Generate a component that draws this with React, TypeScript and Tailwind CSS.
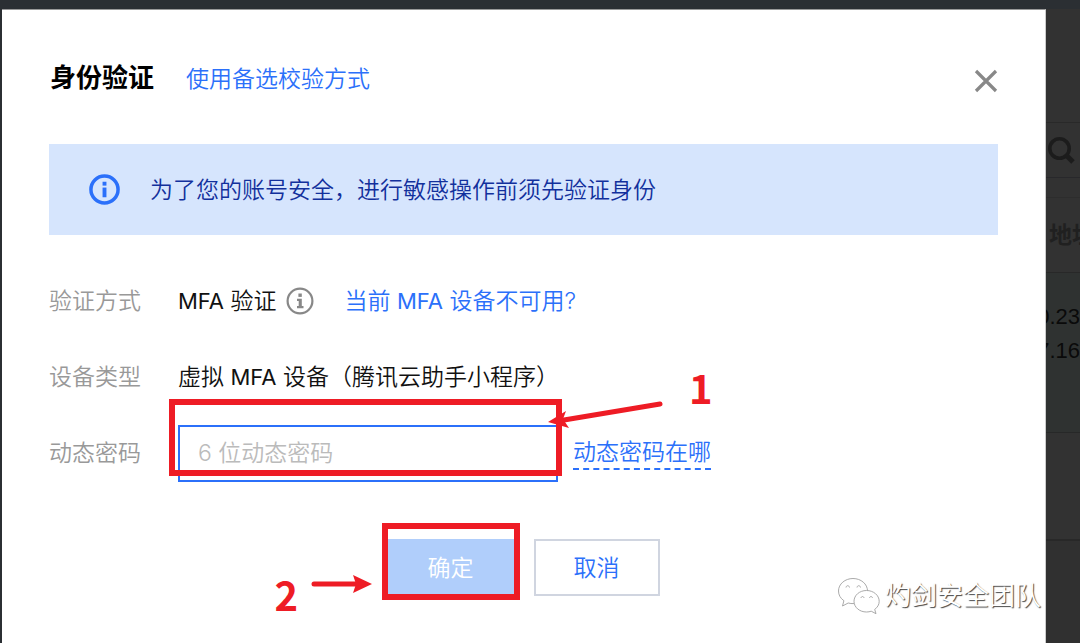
import React from "react";

type InfoIconProps = { className: string; ring: number };

function InfoIcon({ className, ring }: InfoIconProps) {
  return (
    <svg viewBox="0 0 32 32" className={className} fill="currentColor" aria-hidden="true">
      <circle cx="16" cy="16" r="14" fill="none" stroke="currentColor" strokeWidth={ring} />
      <rect x="14" y="8" width="4" height="4" />
      <rect x="14" y="14" width="4" height="10" />
    </svg>
  );
}

function SerifInfoIcon({ className }: { className: string }) {
  return (
    <svg viewBox="0 0 28 28" className={className} fill="currentColor" aria-hidden="true">
      <circle cx="14" cy="14" r="12.4" fill="none" stroke="currentColor" strokeWidth="2.2" />
      <rect x="12.4" y="6.5" width="3.4" height="3.4" />
      <path d="M11 11.8h4.8v7.2h1.7v2.2H11V19h1.7v-5H11z" />
    </svg>
  );
}

function WeChatMark() {
  return (
    <svg
      viewBox="0 0 44 38"
      className="h-[38px] w-11 shrink-0"
      fill="white"
      stroke="#a0a0a0"
      strokeWidth="0.9"
      aria-hidden="true"
    >
      <path d="M16 1.5C8 1.5 1.500 7 1.500 14c0 4 2 7.400 5.400 9.700L5.500 29l5.700-3c1.800.5 3.500.7 5.800.6C24 26 30.500 21 30.500 14S24 1.500 16 1.500z" />
      <path d="M29.500 13.500c-7 0-12.500 4.800-12.500 10.800S22.500 35 29.500 35c1.800 0 3.300-.3 4.700-.8l4.800 2.500-1.300-4.300c2.800-2 4.500-4.800 4.500-8.100 0-6-5.700-10.800-12.700-10.800z" />
      <path
        fill="none"
        d="M9 10.500c.3-2.400 3.200-2.400 3.500 0M20 10.500c.3-2.400 3.200-2.400 3.500 0M24 21c.3-2 2.700-2 3 0M32.500 21c.3-2 2.700-2 3 0"
      />
    </svg>
  );
}

function PageBehind() {
  return (
    <aside className="flex w-[34px] shrink-0 flex-col overflow-hidden bg-[#323232]">
      <div className="h-[114px] border-b border-[#292929]" />
      <div className="flex h-[55px] items-center border-b border-[#28282b]">
        <svg viewBox="0 0 28 28" className="ml-px h-7 w-7" fill="none" stroke="#1c1c1c" aria-hidden="true">
          <circle cx="12.500" cy="12.500" r="9.700" strokeWidth="3.600" />
          <path d="M19.500 19.500l6.500 6.500" strokeWidth="5" />
        </svg>
      </div>
      <div className="h-5 border-b border-[#2d2d2d]" />
      <div className="flex h-[75px] items-center border-b border-[#282828] pl-[3px] text-[23px] leading-8 font-bold whitespace-nowrap text-[#202020]">
        地址
      </div>
      <div className="flex h-40 flex-col items-end border-b border-[#272828] bg-[#2f3231] pt-[27px] font-['Liberation_Sans',sans-serif] text-[22px] leading-[34px] font-normal text-[#0a0a0a]">
        <span>0.23</span>
        <span>7.16</span>
      </div>
      <div className="h-[108px] border-b-2 border-[#282828]" />
      <div className="flex-1 bg-[#303030]" />
    </aside>
  );
}

export default function App() {
  return (
    <div className="flex min-h-screen flex-col overflow-hidden bg-[#2b2f33] pt-[9px] font-['Inter','Noto_Sans_CJK_SC',sans-serif] text-[23px] leading-8 font-[350] text-[#111]">
      <div className="flex flex-1 pl-[2px]">
        <main
          role="dialog"
          aria-labelledby="dialog-title"
          className="relative min-w-0 flex-1 border-t border-r border-t-[#999] border-r-[#ccc] bg-white pr-[47px] pl-[47px]"
        >
          <header className="flex h-[134px] items-start pt-[52px]">
            <h1 id="dialog-title" className="pl-px text-[26px] font-bold text-black">
              身份验证
            </h1>
            <a href="#alternative" className="ml-8 pt-px text-[#2b70fa]">
              使用备选校验方式
            </a>
            <button type="button" aria-label="关闭" className="mt-[7px] ml-auto h-6 w-6 text-[#888]">
              <svg viewBox="0 0 24 24" className="h-6 w-6" fill="none" stroke="currentColor" strokeWidth="3.2" aria-hidden="true">
                <path d="M2 2l20 20M22 2L2 22" />
              </svg>
            </button>
          </header>

          <div className="flex h-[91px] items-center bg-[#d6e5fd] pl-10 text-[#12309c]">
            <InfoIcon className="h-[31px] w-[31px] shrink-0 text-[#2b70fa]" ring={3.6} />
            <p className="ml-[30px]">为了您的账号安全，进行敏感操作前须先验证身份</p>
          </div>

          <form onSubmit={(e: React.FormEvent) => e.preventDefault()}>
            <div className="mt-7 grid grid-cols-[129px_1fr] auto-rows-[76px] items-center">
              <span className="text-[#999]">验证方式</span>
              <div className="flex items-center">
                <span>
                  <span className="text-[22px] font-normal">MFA</span> 验证
                </span>
                <SerifInfoIcon className="ml-[9px] h-7 w-7 shrink-0 text-[#888]" />
                <a href="#unavailable" className="ml-[31px] text-[#2b70fa]">
                  当前 <span className="text-[22px] font-normal">MFA</span> 设备不可用?
                </a>
              </div>

              <span className="text-[#999]">设备类型</span>
              <span>
                虚拟 <span className="text-[22px] font-normal">MFA</span> 设备（腾讯云助手小程序）
              </span>

              <label htmlFor="code" className="text-[#999]">
                动态密码
              </label>
              <div className="flex items-center">
                <div className="relative">
                  <input
                    id="code"
                    type="text"
                    placeholder="6 位动态密码"
                    className="block h-[57px] w-[380px] border-2 border-[#2b70fa] bg-white px-[18px] outline-none placeholder:text-[#bbb]"
                  />
                  <div className="pointer-events-none absolute -top-[26px] -left-[9px] h-[77px] w-[393px] border-[6px] border-[#ee1c25]" />
                  <svg
                    viewBox="0 0 120 30"
                    className="pointer-events-none absolute -top-[25px] left-[368px] h-[30px] w-[120px]"
                    aria-hidden="true"
                  >
                    <path d="M18 20L114 4" stroke="#ee1c25" strokeWidth="5" strokeLinecap="round" />
                    <path d="M2 22L20 11L17 19L23 28z" fill="#ee1c25" />
                  </svg>
                  <span className="pointer-events-none absolute -top-[58px] left-[511px] text-[40px] leading-10 font-bold text-[#ee1c25] font-['Noto_Sans_CJK_SC',sans-serif]">
                    1
                  </span>
                </div>
                <a href="#where" className="ml-[15px] border-b-2 border-dashed border-[#2b70fa] text-[#2b70fa]">
                  动态密码在哪
                </a>
              </div>
            </div>

            <div className="mt-12 flex justify-center gap-5 pb-12">
              <div className="relative">
                <button type="submit" className="block h-[57px] w-[126px] bg-[#b0cefb] text-white">
                  确定
                </button>
                <div className="pointer-events-none absolute -top-4 -left-[6px] h-[77px] w-[138px] border-[6px] border-[#ee1c25]" />
                <svg
                  viewBox="0 0 62 20"
                  className="pointer-events-none absolute top-[35px] -left-[78px] h-5 w-[62px]"
                  aria-hidden="true"
                >
                  <path d="M4 10h42" stroke="#ee1c25" strokeWidth="5" strokeLinecap="round" />
                  <path d="M43 1L62 10L43 19L46 10z" fill="#ee1c25" />
                </svg>
                <span className="pointer-events-none absolute top-[35px] -left-[113px] text-[40px] leading-10 font-bold text-[#ee1c25] font-['Noto_Sans_CJK_SC',sans-serif]">
                  2
                </span>
              </div>
              <button type="button" className="h-[57px] w-[126px] border-2 border-[#d0d5e0] bg-white text-[#2b70fa]">
                取消
              </button>
            </div>
          </form>

          <div className="pointer-events-none absolute right-0 bottom-[29px] flex items-center gap-1">
            <WeChatMark />
            <span className="text-[26px] whitespace-nowrap text-white [text-shadow:1px_1px_1px_#444] pr-1">
              灼剑安全团队
            </span>
          </div>
        </main>
        <PageBehind />
      </div>
    </div>
  );
}
